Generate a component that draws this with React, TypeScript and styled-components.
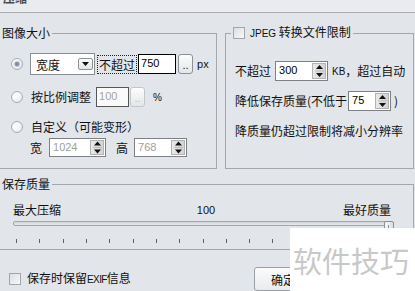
import React from "react";
import styled, { createGlobalStyle } from "styled-components";

const GlobalStyle = createGlobalStyle`
  html, body {
    margin: 0;
    padding: 0;
    background: #e2e5e9;
  }
  body {
    width: 415px;
    height: 291px;
    overflow: hidden;
    font-family: "Noto Sans CJK SC", "Liberation Sans", sans-serif;
    font-size: 12px;
    color: #111;
  }
`;

const Dialog = styled.div`
  position: relative;
  width: 415px;
  height: 291px;
  overflow: hidden;
  display: flex;
  flex-direction: column;
`;

const TitleStrip = styled.div`
  height: 12px;
  flex: none;
  border-bottom: 1px solid #a9adb1;
  background: #e9ebee;
  overflow: hidden;
`;

const TitleText = styled.div`
  margin-top: -9px;
  padding-left: 3px;
  font-weight: bold;
  line-height: 14px;
  color: #4a4a4a;
`;

const TopRow = styled.div`
  display: flex;
  gap: 8px;
  margin-top: 14px;
`;

const Group = styled.fieldset<{ $width: number; $height: number; $offset?: number; $top?: number }>`
  box-sizing: border-box;
  flex: none;
  width: ${(p) => p.$width}px;
  height: ${(p) => p.$height}px;
  margin: ${(p) => p.$top ?? 0}px 0 0 ${(p) => p.$offset ?? 0}px;
  padding: 0;
  min-width: 0;
  border: 1px solid #a4a8ac;
`;

const Legend = styled.legend`
  margin-left: 5px;
  padding: 0 2px;
  height: 12px;
  line-height: 12px;
  font-size: 12px;
  display: flex;
  align-items: center;
  gap: 5px;
`;

const GroupBody = styled.div<{ $left: number }>`
  display: flex;
  flex-direction: column;
  padding-left: ${(p) => p.$left}px;
`;

const Row = styled.div<{ $top: number; $h: number }>`
  display: flex;
  align-items: center;
  height: ${(p) => p.$h}px;
  margin-top: ${(p) => p.$top}px;
  white-space: nowrap;
`;

const Text = styled.span<{ $ml?: number }>`
  margin-left: ${(p) => p.$ml ?? 0}px;
  line-height: 14px;
  white-space: nowrap;
`;

const Latin = styled.span<{ $ml?: number; $size?: number; $tight?: boolean }>`
  margin-left: ${(p) => p.$ml ?? 0}px;
  font-family: "Liberation Sans", sans-serif;
  font-size: ${(p) => p.$size ?? 11}px;
  letter-spacing: ${(p) => (p.$tight ? "-0.6px" : "0")};
`;

const Radio = styled.span<{ $checked?: boolean }>`
  box-sizing: border-box;
  flex: none;
  width: 12px;
  height: 12px;
  border-radius: 50%;
  border: 1px solid #a9adb2;
  background: radial-gradient(circle at 40% 40%, #ffffff 20%, #dde0e4 100%);
  display: flex;
  align-items: center;
  justify-content: center;
  &::after {
    content: "";
    width: 4px;
    height: 4px;
    border-radius: 50%;
    background: ${(p) => (p.$checked ? "#7b8ca4" : "transparent")};
    box-shadow: ${(p) => (p.$checked ? "0 0 1px 1px #b7c2d2" : "none")};
  }
`;

const CheckBox = styled.span<{ $ml?: number }>`
  box-sizing: border-box;
  flex: none;
  width: 12px;
  height: 12px;
  margin-left: ${(p) => p.$ml ?? 0}px;
  border: 1px solid #a2a6ab;
  background: linear-gradient(135deg, #dcdfe3, #f7f8f9);
`;

const Select = styled.div<{ $ml: number }>`
  box-sizing: border-box;
  display: flex;
  align-items: center;
  justify-content: space-between;
  width: 65px;
  height: 22px;
  margin-left: ${(p) => p.$ml}px;
  padding: 0 1px 0 5px;
  background: #fff;
  border: 1px solid #8a8f96;
`;

const DropButton = styled.span`
  box-sizing: border-box;
  width: 15px;
  height: 12px;
  border: 1px solid #8e9297;
  border-radius: 2px;
  background: linear-gradient(#ffffff, #e3e5e8);
  display: flex;
  align-items: center;
  justify-content: center;
`;

const FocusLabel = styled.span<{ $ml: number }>`
  box-sizing: border-box;
  height: 19px;
  margin-left: ${(p) => p.$ml}px;
  padding: 0 1px;
  border: 1px dotted #222;
  line-height: 17px;
`;

const Field = styled.div<{ $w: number; $ml: number; $disabled?: boolean }>`
  box-sizing: border-box;
  width: ${(p) => p.$w}px;
  height: 20px;
  margin-left: ${(p) => p.$ml}px;
  padding-left: 2px;
  border: 1px solid ${(p) => (p.$disabled ? "#555" : "#000")};
  background: ${(p) => (p.$disabled ? "#fafafa" : "#fff")};
  color: ${(p) => (p.$disabled ? "#a4a4a4" : "#000")};
  font-family: "Liberation Sans", sans-serif;
  font-size: 11px;
  line-height: 17px;
`;

const DotsButton = styled.span<{ $ml: number; $disabled?: boolean }>`
  box-sizing: border-box;
  width: 15px;
  height: 20px;
  margin-left: ${(p) => p.$ml}px;
  border: 1px solid ${(p) => (p.$disabled ? "#c3c7cc" : "#8d9196")};
  border-radius: 3px;
  background: linear-gradient(#fdfdfd, #e4e6e9);
  color: ${(p) => (p.$disabled ? "#bbb" : "#111")};
  font-family: "Liberation Sans", sans-serif;
  font-size: 11px;
  line-height: 20px;
  text-align: center;
`;

const Spin = styled.div<{ $w: number; $ml: number; $h?: number }>`
  box-sizing: border-box;
  display: flex;
  width: ${(p) => p.$w}px;
  height: ${(p) => p.$h ?? 20}px;
  margin-left: ${(p) => p.$ml}px;
  border: 1px solid #7d8186;
  background: #fff;
`;

const SpinValue = styled.span<{ $disabled?: boolean }>`
  flex: 1;
  padding-left: 3px;
  font-family: "Liberation Sans", sans-serif;
  font-size: 11px;
  line-height: 16px;
  color: ${(p) => (p.$disabled ? "#a0a0a0" : "#000")};
`;

const SpinArrows = styled.span`
  box-sizing: border-box;
  width: 14px;
  margin: 1px;
  border: 1px solid #b3b3b3;
  background: linear-gradient(90deg, #e9e9e9, #d3d3d3);
  display: flex;
  align-items: center;
  justify-content: center;
`;

const QualityLabels = styled.div`
  display: grid;
  grid-template-columns: 1fr auto 1fr;
  align-items: center;
  height: 14px;
  margin-top: 11px;
  padding: 0 22px 0 18px;
`;

const MidValue = styled.span`
  margin-left: 8px;
  font-family: "Liberation Sans", sans-serif;
  font-size: 11px;
`;

const RightText = styled.span`
  justify-self: end;
`;

const SliderArea = styled.div`
  position: relative;
  height: 16px;
  margin-top: 5px;
`;

const Track = styled.div`
  box-sizing: border-box;
  width: 377px;
  height: 5px;
  margin: 6px 0 0 18px;
  border: 1px solid #a2a6ab;
  border-radius: 2px;
  background: linear-gradient(#cfd3d7, #e8eaed);
`;

const Thumb = styled.div`
  position: absolute;
  left: 389px;
  top: 0;
  box-sizing: border-box;
  width: 10px;
  height: 17px;
  border: 1px solid #8c9196;
  border-radius: 2px;
  background: linear-gradient(90deg, #f6f7f8, #dcdfe2);
  &::after {
    content: "";
    position: absolute;
    left: 3px;
    top: 3px;
    width: 1px;
    height: 5px;
    background: #8c9196;
  }
`;

const Ticks = styled.div`
  display: flex;
  justify-content: space-between;
  width: 374px;
  height: 4px;
  margin: 2px 0 0 21px;
`;

const Tick = styled.span`
  width: 1px;
  height: 4px;
  background: #5e6266;
`;

const BottomRow = styled.div`
  display: flex;
  align-items: center;
  height: 24px;
  margin-top: 17px;
  padding: 0 103px 0 9px;
`;

const PushButton = styled.button`
  box-sizing: border-box;
  width: 58px;
  height: 24px;
  margin-left: auto;
  padding: 0;
  border: 1px solid #9aa0a7;
  border-radius: 3px;
  background: linear-gradient(#fbfbfc, #e9ebed);
  font-family: "Noto Sans CJK SC", sans-serif;
  font-size: 12px;
  color: #111;
`;

const Watermark = styled.div`
  position: absolute;
  left: 290px;
  top: 228px;
  right: 0;
  bottom: 0;
  background: #ffffff;
  display: flex;
  align-items: center;
  padding-left: 3px;
  font-family: "Noto Sans CJK SC", sans-serif;
  font-size: 29px;
  color: #c8c8c8;
  white-space: nowrap;
`;

const DownTriangle = () => (
  <svg width="7" height="4" viewBox="0 0 7 4">
    <polygon points="0,0 7,0 3.5,4" fill="#111" />
  </svg>
);

const SpinGlyph = ({ h }: { h: number }) => (
  <svg width="9" height={h} viewBox={`0 0 9 ${h}`}>
    <polygon points={`1,${h / 2 - 2} 8,${h / 2 - 2} 4.5,${h / 2 - 6}`} fill="#111" />
    <line x1="0" x2="9" y1={h / 2} y2={h / 2} stroke="#bdbdbd" strokeWidth="1" />
    <polygon points={`1,${h / 2 + 2} 8,${h / 2 + 2} 4.5,${h / 2 + 6}`} fill="#111" />
  </svg>
);

type SpinProps = { value: string; w: number; ml: number; h?: number; disabled?: boolean };

const SpinBox = ({ value, w, ml, h, disabled }: SpinProps) => (
  <Spin $w={w} $ml={ml} $h={h}>
    <SpinValue $disabled={disabled}>{value}</SpinValue>
    <SpinArrows>
      <SpinGlyph h={(h ?? 20) - 6} />
    </SpinArrows>
  </Spin>
);

const tickCount = 17;

const App: React.FunctionComponent = () => {
  return (
    <Dialog>
      <GlobalStyle />
      <TitleStrip>
        <TitleText>压缩</TitleText>
      </TitleStrip>

      <TopRow>
        <Group $width={223} $height={142} $offset={-6}>
          <Legend>图像大小</Legend>
          <GroupBody $left={16}>
            <Row $top={14} $h={22}>
              <Radio $checked />
              <Select $ml={7}>
                <span>宽度</span>
                <DropButton>
                  <DownTriangle />
                </DropButton>
              </Select>
              <FocusLabel $ml={2}>不超过</FocusLabel>
              <Field $w={38} $ml={1}>750</Field>
              <DotsButton $ml={2}>..</DotsButton>
              <Latin $ml={4}>px</Latin>
            </Row>
            <Row $top={12} $h={20}>
              <Radio />
              <Text $ml={8}>按比例调整</Text>
              <Field $w={33} $ml={5} $disabled>100</Field>
              <DotsButton $ml={1} $disabled>..</DotsButton>
              <Latin $ml={8} $size={10}>%</Latin>
            </Row>
            <Row $top={13} $h={14}>
              <Radio />
              <Text $ml={8}>自定义（可能变形）</Text>
            </Row>
            <Row $top={4} $h={19}>
              <Text $ml={19}>宽</Text>
              <SpinBox value="1024" w={57} ml={7} h={19} disabled />
              <Text $ml={10}>高</Text>
              <SpinBox value="768" w={53} ml={6} h={19} disabled />
            </Row>
          </GroupBody>
        </Group>

        <Group $width={189} $height={142}>
          <Legend>
            <CheckBox />
            <span>
              <Latin $size={10}>JPEG</Latin> 转换文件限制
            </span>
          </Legend>
          <GroupBody $left={9}>
            <Row $top={22} $h={20}>
              <Text>不超过</Text>
              <SpinBox value="300" w={53} ml={4} />
              <Latin $ml={4} $size={10}>KB</Latin>
              <Text>，超过自动</Text>
            </Row>
            <Row $top={10} $h={20}>
              <Text>降低保存质量(不低于</Text>
              <SpinBox value="75" w={43} ml={1} />
              <Text $ml={3}>)</Text>
            </Row>
            <Row $top={13} $h={14}>
              <Text>降质量仍超过限制将减小分辨率</Text>
            </Row>
          </GroupBody>
        </Group>
      </TopRow>

      <Group $width={420} $height={72} $offset={-6} $top={9}>
        <Legend>保存质量</Legend>
        <QualityLabels>
          <span>最大压缩</span>
          <MidValue>100</MidValue>
          <RightText>最好质量</RightText>
        </QualityLabels>
        <SliderArea>
          <Track />
          <Thumb />
        </SliderArea>
        <Ticks>
          {Array.from({ length: tickCount }).map((_, i) => (
            <Tick key={i} />
          ))}
        </Ticks>
      </Group>

      <BottomRow>
        <CheckBox />
        <Text $ml={6}>
          保存时保留<Latin $size={10} $tight>EXIF</Latin>信息
        </Text>
        <PushButton>确定</PushButton>
      </BottomRow>

      <Watermark>软件技巧</Watermark>
    </Dialog>
  );
};

export default App;
